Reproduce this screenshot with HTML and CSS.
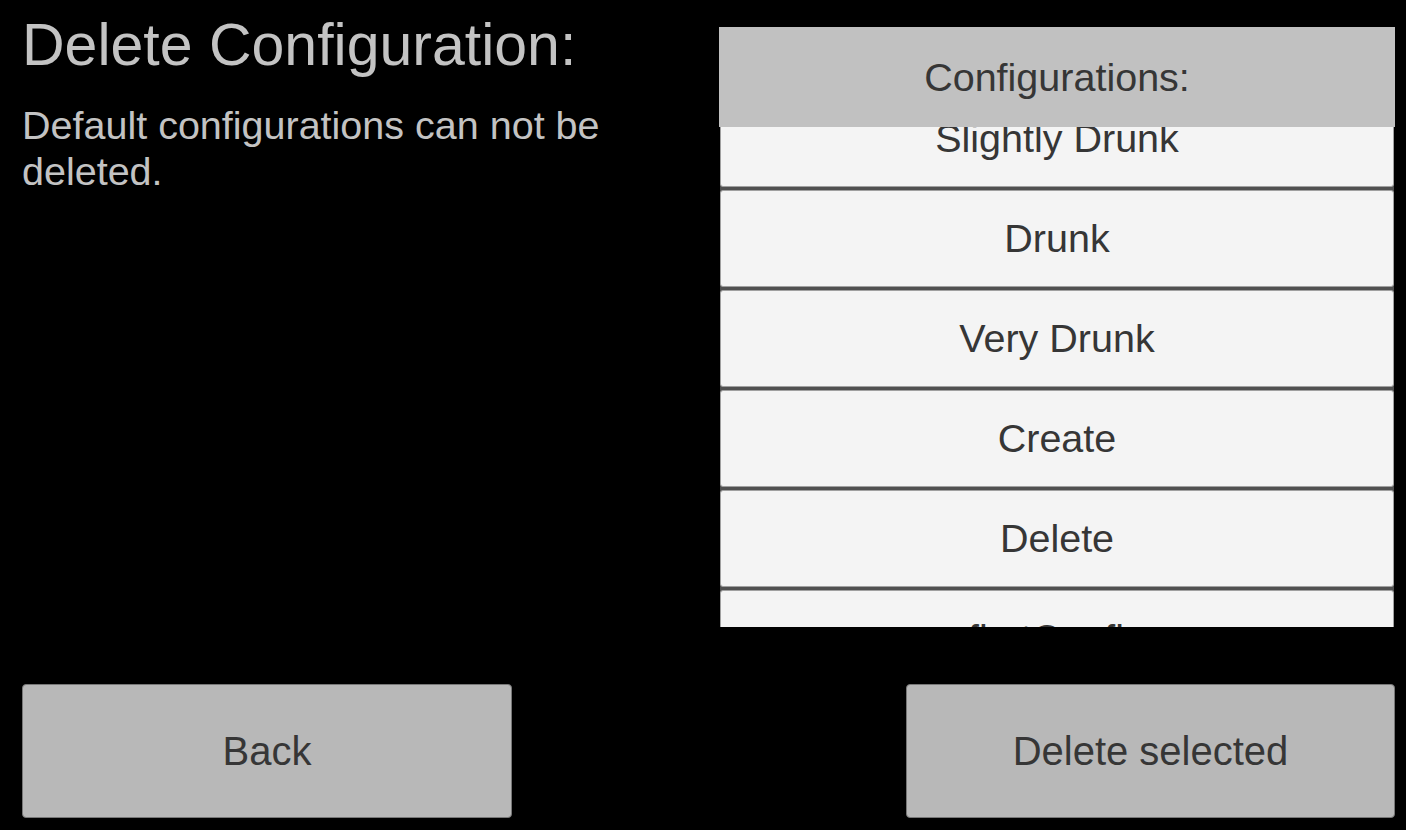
FILE: index.html
```html
<!DOCTYPE html>
<html>
<head>
<meta charset="utf-8">
<title>Delete Configuration</title>
<link rel="stylesheet" href="styles.css">
</head>
<body>
<div class="page">
  <div class="top">
    <div class="left">
      <h1 class="title">Delete Configuration:</h1>
      <p class="note">Default configurations can not be deleted.</p>
    </div>
    <div class="panel">
      <div class="panel-header">Configurations:</div>
      <div class="viewport">
        <ul class="list">
          <li class="item">Slightly Drunk</li>
          <li class="item">Drunk</li>
          <li class="item">Very Drunk</li>
          <li class="item">Create</li>
          <li class="item">Delete</li>
          <li class="item">firstConfig</li>
        </ul>
      </div>
    </div>
  </div>
  <div class="bottom">
    <button class="btn">Back</button>
    <button class="btn btn-right">Delete selected</button>
  </div>
</div>
</body>
</html>
```
FILE: styles.css
```css
html, body {
  margin: 0;
  padding: 0;
  background: #000;
}
body {
  font-family: "Liberation Sans", Arial, sans-serif;
  width: 1406px;
  height: 830px;
  overflow: hidden;
}
.page {
  display: flex;
  flex-direction: column;
  height: 830px;
}
.top {
  display: flex;
  align-items: flex-start;
}
.left {
  width: 697px;
  padding-left: 22px;
}
.title {
  margin: 11px 0 0 0;
  font-size: 59px;
  font-weight: normal;
  line-height: 68px;
  color: #c3c3c3;
}
.note {
  margin: 23px 0 0 0;
  width: 610px;
  font-size: 39.5px;
  line-height: 46px;
  color: #c3c3c3;
}
.panel {
  width: 676px;
  margin-top: 27px;
}
.panel-header {
  height: 100px;
  background: #c1c1c1;
  color: #363636;
  font-size: 39.5px;
  display: flex;
  align-items: center;
  justify-content: center;
}
.viewport {
  height: 500px;
  margin: 0 1px;
  overflow: hidden;
  background: #505050;
}
.list {
  list-style: none;
  margin: -37px 0 0 0;
  padding: 0;
  display: flex;
  flex-direction: column;
  gap: 3px;
}
.item {
  box-sizing: border-box;
  height: 97px;
  background: #f4f4f4;
  border: 1px solid #a0a0a0;
  border-radius: 3px;
  color: #363636;
  font-size: 39.5px;
  display: flex;
  align-items: center;
  justify-content: center;
}
.bottom {
  margin-top: auto;
  display: flex;
  justify-content: space-between;
  padding: 0 11px 12px 22px;
}
.btn {
  box-sizing: border-box;
  width: 490px;
  height: 134px;
  background: #b8b8b8;
  border: 1px solid #777;
  border-radius: 4px;
  color: #363636;
  font-family: "Liberation Sans", Arial, sans-serif;
  font-size: 40px;
  padding: 0;
}
.btn-right {
  width: 489px;
}
```
